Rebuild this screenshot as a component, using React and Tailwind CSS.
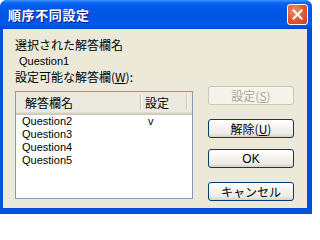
import React from 'react';

const ui = { fontFamily: '"Liberation Sans", "Noto Sans CJK JP", sans-serif' };
const jp = { fontFamily: '"Noto Sans CJK JP", sans-serif' };

const rows = [
  { name: 'Question2', set: 'v' },
  { name: 'Question3', set: '' },
  { name: 'Question4', set: '' },
  { name: 'Question5', set: '' },
];

function XpButton({ children, disabled, className = '' }) {
  return (
    <button
      disabled={disabled}
      style={jp}
      className={`w-[86px] h-[19px] rounded-[3px] border text-[12px] leading-none flex items-center justify-center ${
        disabled
          ? 'border-[#C9C7BA] bg-[#F5F4EA] text-[#ACA899]'
          : 'border-[#003C74] text-black bg-[linear-gradient(180deg,#FFFFFF_0%,#F4F3EE_45%,#ECEBE6_80%,#D6D0C5_100%)]'
      } ${className}`}
    >
      {children}
    </button>
  );
}

export default function App() {
  return (
    <div className="w-[312px] h-[214px] flex flex-col rounded-t-[7px] overflow-hidden bg-[#0050E0]">
      {/* Title bar */}
      <div className="h-[29px] shrink-0 flex items-center justify-between pl-[8px] pr-[4px] bg-[linear-gradient(180deg,#3D95FF_0%,#0A66F4_10%,#0058EA_30%,#0054E3_60%,#005AEE_85%,#0046D4_100%)]">
        <span
          style={{ ...jp, textShadow: '1px 1px 0 #0A1883' }}
          className="text-white font-bold text-[13px] tracking-[0.6px] leading-none"
        >
          順序不同設定
        </span>
        <div className="w-[21px] h-[21px] rounded-[3px] border border-white bg-[radial-gradient(circle_at_35%_30%,#F0906C_0%,#E2542C_55%,#C4401C_100%)] flex items-center justify-center">
          <svg width="11" height="11" viewBox="0 0 11 11">
            <path d="M1.5 1.5 L9.5 9.5 M9.5 1.5 L1.5 9.5" stroke="white" strokeWidth="2" strokeLinecap="square" />
          </svg>
        </div>
      </div>

      {/* Body */}
      <div className="flex-1 ml-[3px] mr-[5px] mb-[6px] bg-[#ECE9D8] flex">
        <div className="pl-[12px] pt-[8px] flex flex-col">
          <div style={jp} className="text-[12px] leading-[16px] text-black">選択された解答欄名</div>
          <div style={ui} className="text-[11px] leading-[16px] text-black pl-[4px]">Question1</div>
          <div style={jp} className="text-[12px] leading-[16px] text-black">
            設定可能な解答欄(<span className="underline">W</span>):
          </div>

          {/* List view */}
          <div className="mt-[6px] w-[178px] h-[108px] border border-[#7F9DB9] bg-white flex flex-col">
            <div className="h-[20px] flex bg-[#EBEAE1]">
              <div className="w-[124px] flex items-center pl-[9px] pt-[2px]">
                <span style={jp} className="text-[12px] leading-none text-black">解答欄名</span>
              </div>
              <div className="w-[2px] flex flex-col justify-center">
                <div className="h-[14px] flex">
                  <div className="w-[1px] bg-[#C7C5B2]" />
                  <div className="w-[1px] bg-white" />
                </div>
              </div>
              <div className="w-[44px] flex items-center pl-[3px] pt-[2px]">
                <span style={jp} className="text-[12px] leading-none text-black">設定</span>
              </div>
              <div className="w-[2px] flex flex-col justify-center">
                <div className="h-[14px] flex">
                  <div className="w-[1px] bg-[#C7C5B2]" />
                  <div className="w-[1px] bg-white" />
                </div>
              </div>
            </div>
            <div className="h-[1px] bg-[#E2DECD]" />
            <div className="h-[1px] bg-[#D6D2C2]" />
            <div className="h-[1px] bg-[#CBC7B8]" />
            <div className="flex flex-col">
              {rows.map((r) => (
                <div key={r.name} style={ui} className="h-[13px] flex items-center text-[11px] leading-none text-black">
                  <span className="w-[126px] pl-[6px]">{r.name}</span>
                  <span className="pl-[6px]">{r.set}</span>
                </div>
              ))}
            </div>
          </div>
        </div>

        {/* Buttons */}
        <div className="ml-[15px] pt-[57px] flex flex-col">
          <XpButton disabled>
            設定(<span className="underline">S</span>)
          </XpButton>
          <XpButton className="mt-[14px]">
            解除(<span className="underline">U</span>)
          </XpButton>
          <XpButton className="mt-[11px]">
            <span style={ui} className="text-[12px]">OK</span>
          </XpButton>
          <XpButton className="mt-[14px]">キャンセル</XpButton>
        </div>
      </div>
    </div>
  );
}
